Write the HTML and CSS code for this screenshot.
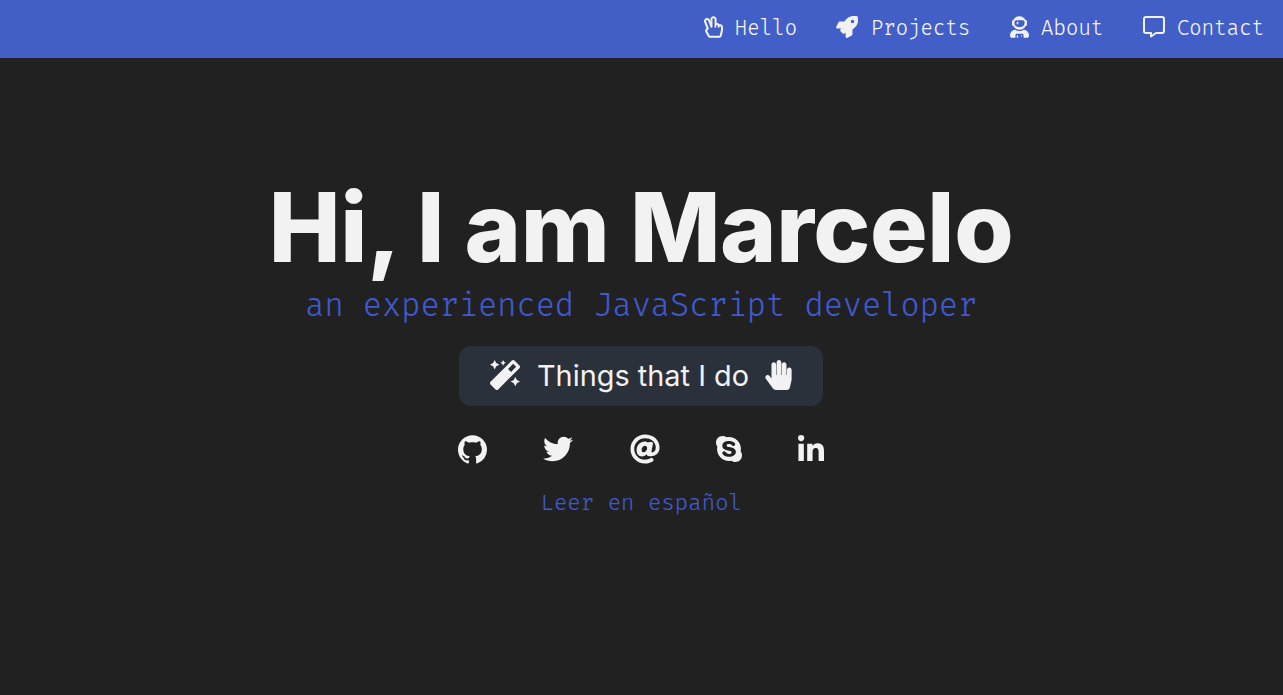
FILE: index.html
```html
<!DOCTYPE html>
<html lang="en">
<head>
<meta charset="utf-8">
<title>Marcelo</title>
<link rel="stylesheet" href="styles.css">
</head>
<body>
<nav class="nav">
  <a class="nav-link"><svg class="nav-icon peace" viewBox="0 0 448 512"><path fill="currentColor" d="M362.146 191.976c-13.710-21.649-38.761-34.016-65.006-30.341V74c0-40.804-32.811-74-73.141-74-40.330 0-73.140 33.196-73.140 74L160 168l-18.679-78.850C126.578 50.843 83.850 32.110 46.209 47.208 8.735 62.238-9.571 104.963 5.008 142.850l55.757 144.927c-30.557 24.956-43.994 57.809-24.733 92.218l54.853 97.999C102.625 498.970 124.730 512 148.575 512h205.702c30.744 0 57.558-21.440 64.555-51.797l27.427-118.999a67.801 67.801 0 0 0 1.729-15.203L448 256c0-44.956-43.263-77.343-85.854-64.024zM399.987 326c0 1.488-.169 2.977-.502 4.423l-27.427 119.001c-1.978 8.582-9.290 14.576-17.782 14.576H148.575c-6.486 0-12.542-3.621-15.805-9.449l-54.854-98c-4.557-8.141-2.619-18.668 4.508-24.488l26.647-21.764a16 16 0 0 0 4.812-18.139l-64.090-166.549C37.226 92.956 84.370 74.837 96.510 106.389l59.784 155.357A16 16 0 0 0 171.227 272h11.632c8.837 0 16-7.163 16-16V74c0-34.375 50.281-34.430 50.281 0v182c0 8.837 7.163 16 16 16h6.856c8.837 0 16-7.163 16-16v-28c0-25.122 36.567-25.159 36.567 0v28c0 8.837 7.163 16 16 16h6.856c8.837 0 16-7.163 16-16 0-25.120 36.567-25.160 36.567 0v70z"/></svg><span>Hello</span></a>
  <a class="nav-link"><svg class="nav-icon" viewBox="0 0 512 512"><path fill="currentColor" d="M505.120 19.094c-1.190-5.532-6.659-11-12.207-12.188C460.716 0 435.507 0 410.407 0 307.175 0 245.270 55.203 199.052 128H94.838c-16.348.016-35.557 11.875-42.887 26.484L2.516 253.297A28.400 28.400 0 0 0 0 264a24.009 24.009 0 0 0 24.006 24h103.810l-22.474 22.469c-11.365 11.360-12.996 32.258 0 45.250l50.904 50.906c11.156 11.188 32.156 13.156 45.277 0l22.475-22.469V488a24.009 24.009 0 0 0 24.006 24 28.560 28.560 0 0 0 10.707-2.516l98.728-49.390c14.629-7.297 26.508-26.500 26.508-42.860V312.797c72.598-46.313 128.035-108.406 128.035-211.094.093-25.203.093-50.406-6.862-82.610zM384.040 168A40 40 0 1 1 424.050 128 40.023 40.023 0 0 1 384.040 168z"/></svg><span>Projects</span></a>
  <a class="nav-link"><svg class="nav-icon astronaut" viewBox="0 0 448 512"><path fill="currentColor" d="M64 224h13.500c24.700 56.500 80.900 96 146.500 96s121.800-39.500 146.500-96H384c8.800 0 16-7.200 16-16v-96c0-8.800-7.200-16-16-16h-13.500C345.800 39.500 289.600 0 224 0S102.200 39.500 77.500 96H64c-8.800 0-16 7.200-16 16v96c0 8.800 7.200 16 16 16zm40-88c0-22.100 21.500-40 48-40h144c26.500 0 48 17.900 48 40v24c0 53-43 96-96 96h-48c-53 0-96-43-96-96v-24zm72 72l12-36 36-12-36-12-12-36-12 36-36 12 36 12 12 36zm151.600 113.400C297.700 340.700 262.200 352 224 352s-73.700-11.300-103.600-30.600C52.900 328.500 0 385 0 454.400v9.600c0 26.500 21.500 48 48 48h80v-64c0-17.700 14.300-32 32-32h128c17.700 0 32 14.300 32 32v64h80c26.500 0 48-21.500 48-48v-9.600c0-69.400-52.900-125.900-120.400-133zM272 448c-8.800 0-16 7.200-16 16s7.200 16 16 16 16-7.200 16-16-7.200-16-16-16zm-96 0c-8.800 0-16 7.200-16 16v48h32v-48c0-8.800-7.200-16-16-16z"/></svg><span>About</span></a>
  <a class="nav-link"><svg class="nav-icon" viewBox="0 0 22 22"><path fill="none" stroke="currentColor" stroke-width="2" stroke-linejoin="round" d="M3 1H19Q21 1 21 3V15Q21 17 19 17H13L8 20.500V17H3Q1 17 1 15V3Q1 1 3 1Z"/></svg><span>Contact</span></a>
</nav>
<main class="hero">
  <h1 class="title">Hi, I am Marcelo</h1>
  <p class="subtitle">an experienced JavaScript developer</p>
  <a class="button"><svg class="wand" viewBox="0 0 512 512"><path fill="currentColor" d="M224 96l16-32 32-16-32-16-16-32-16 32-32 16 32 16 16 32zM80 160l26.660-53.330L160 80l-53.340-26.670L80 0 53.340 53.330 0 80l53.340 26.670L80 160zm352 128l-26.660 53.330L352 368l53.340 26.670L432 448l26.660-53.330L512 368l-53.340-26.670L432 288zm70.620-193.770L417.770 9.380C411.530 3.120 403.340 0 395.150 0c-8.190 0-16.380 3.120-22.630 9.380L9.380 372.520c-12.500 12.500-12.500 32.760 0 45.250l84.850 84.850c6.250 6.250 14.440 9.370 22.620 9.370 8.190 0 16.380-3.120 22.630-9.370l363.140-363.150c12.500-12.480 12.500-32.750 0-45.240zM359.450 203.460l-50.910-50.910 86.600-86.600 50.910 50.910-86.600 86.600z"/></svg><span>Things that I do</span><svg class="hand" viewBox="0 0 448 512"><path fill="currentColor" d="M408.781 128.007C386.356 127.578 368 146.360 368 168.790V256h-8V79.790c0-22.430-18.356-41.212-40.781-40.783C297.488 39.423 280 57.169 280 79v177h-8V40.790C272 18.360 253.644-.422 231.219.007 209.488.423 192 18.169 192 40v216h-8V80.790c0-22.430-18.356-41.212-40.781-40.783C121.488 40.423 104 58.169 104 80v235.992l-31.648-43.519c-12.993-17.866-38.009-21.817-55.877-8.823-17.865 12.994-21.815 38.010-8.822 55.877l125.601 172.705A48 48 0 0 0 172.073 512h197.590c22.274 0 41.622-15.324 46.724-37.006l26.508-112.660a192.011 192.011 0 0 0 5.104-43.975V168c.001-21.831-17.487-39.577-39.218-39.993z"/></svg></a>
  <div class="social">
    <svg class="github" viewBox="0 0 16 15.700"><path fill="currentColor" d="M8 0C3.580 0 0 3.580 0 8c0 3.540 2.290 6.530 5.470 7.590.4.070.55-.17.55-.38 0-.19-.01-.82-.01-1.490-2.010.37-2.530-.49-2.690-.94-.09-.23-.48-.94-.82-1.130-.28-.15-.68-.52-.01-.53.63-.01 1.080.58 1.230.82.72 1.210 1.870.87 2.330.66.07-.52.28-.87.51-1.070-1.780-.2-3.640-.89-3.640-3.950 0-.87.31-1.590.82-2.150-.08-.2-.36-1.020.08-2.120 0 0 .67-.21 2.200.82.64-.18 1.320-.27 2-.27s1.360.09 2 .27c1.530-1.040 2.200-.82 2.200-.82.44 1.100.16 1.920.08 2.120.51.56.82 1.270.82 2.150 0 3.070-1.870 3.750-3.650 3.950.29.25.54.73.54 1.480 0 1.070-.01 1.930-.01 2.200 0 .21.15.46.55.38A8.010 8.010 0 0 0 16 8c0-4.420-3.580-8-8-8z"/></svg>
    <svg class="twitter" viewBox="0 0 512 512"><path fill="currentColor" d="M459.370 151.716c.325 4.548.325 9.097.325 13.645 0 138.720-105.583 298.558-298.558 298.558-59.452 0-114.680-17.219-161.137-47.106 8.447.974 16.568 1.299 25.340 1.299 49.055 0 94.213-16.568 130.274-44.832-46.132-.975-84.792-31.188-98.112-72.772 6.498.974 12.995 1.624 19.818 1.624 9.421 0 18.843-1.300 27.614-3.573-48.081-9.747-84.143-51.980-84.143-102.985v-1.299c13.969 7.797 30.214 12.670 47.431 13.319-28.264-18.843-46.781-51.005-46.781-87.391 0-19.492 5.197-37.360 14.294-52.954 51.655 63.675 129.300 105.258 216.365 109.807-1.624-7.797-2.599-15.918-2.599-24.040 0-57.828 46.782-104.934 104.934-104.934 30.213 0 57.502 12.670 76.670 33.137 23.715-4.548 46.456-13.320 66.599-25.340-7.798 24.366-24.366 44.833-46.132 57.827 21.117-2.273 41.584-8.122 60.426-16.243-14.292 20.791-32.161 39.308-52.628 54.253z"/></svg>
    <svg class="at" viewBox="0 0 512 512"><path fill="currentColor" d="M256 8C118.941 8 8 118.919 8 256c0 137.059 110.919 248 248 248 48.154 0 95.342-14.140 135.408-40.223 12.005-7.815 14.625-24.288 5.552-35.372l-10.177-12.433c-7.671-9.371-21.179-11.667-31.373-5.129C325.920 429.757 291.314 440 256 440c-101.458 0-184-82.542-184-184S154.542 72 256 72c100.139 0 184 57.619 184 160 0 38.786-21.093 79.742-58.170 83.693-17.349-.454-16.910-12.857-13.476-30.024l23.433-121.110C394.653 149.750 383.308 136 368.225 136h-44.981a13.518 13.518 0 0 0-13.432 11.993l-.010.092c-14.697-17.901-40.448-21.775-59.971-21.775-74.580 0-137.831 62.234-137.831 151.460 0 65.303 36.785 105.870 96 105.870 26.984 0 57.369-15.637 74.991-38.333 9.522 34.104 40.613 34.104 70.710 34.104C462.609 379.410 504 307.798 504 232 504 95.653 394.023 8 256 8zm-21.680 304.430c-22.249 0-36.070-15.623-36.070-40.771 0-44.993 30.779-72.729 58.630-72.729 22.292 0 35.601 15.241 35.601 40.770 0 45.061-33.875 72.730-58.161 72.730z"/></svg>
    <svg class="skype" viewBox="0 0 448 512"><path fill="currentColor" d="M424.700 299.800c2.900-14 4.700-28.900 4.700-43.800 0-113.500-91.900-205.300-205.300-205.300-14.900 0-29.700 1.700-43.800 4.700C161.300 40.700 137.700 32 112 32 50.200 32 0 82.200 0 144c0 25.700 8.700 49.300 23.300 68.200-2.900 14-4.700 28.900-4.700 43.800 0 113.500 91.900 205.300 205.300 205.300 14.900 0 29.700-1.700 43.800-4.700 19 14.600 42.600 23.300 68.200 23.300 61.800 0 112-50.200 112-112 .1-25.600-8.600-49.200-23.200-68.100zm-194.600 91.500c-65.600 0-120.500-29.200-120.500-65 0-16 9-30.600 29.500-30.600 31.200 0 34.100 44.900 88.100 44.900 25.700 0 42.300-11.400 42.300-26.300 0-18.700-16-21.600-42-28-62.500-15.400-117.800-22-117.800-87.200 0-59.200 58.600-81.100 109.100-81.100 55.100 0 110.800 21.900 110.800 55.400 0 16.900-11.400 31.800-30.300 31.800-28.300 0-29.200-33.500-75-33.500-25.700 0-42 7-42 22.500 0 19.800 20.800 21.800 69.100 33 41.400 9.300 90.700 26.800 90.700 77.600 0 59.100-57.100 86.500-112 86.500z"/></svg>
    <svg class="linkedin" viewBox="0 0 448 448"><path fill="currentColor" d="M100.280 448H7.400V148.900h92.880zM53.790 108.100C24.090 108.100 0 83.500 0 53.800a53.790 53.790 0 0 1 107.580 0c0 29.700-24.100 54.300-53.790 54.300zM447.900 448h-92.680V302.400c0-34.700-.7-79.200-48.290-79.200-48.290 0-55.690 37.700-55.690 76.700V448h-92.780V148.900h89.080v40.800h1.300c12.400-23.500 42.690-48.300 87.880-48.300 94 0 111.280 61.900 111.280 142.300V448z"/></svg>
  </div>
  <a class="language">Leer en español</a>
</main>
</body>
</html>
```
FILE: styles.css
```css
* { box-sizing: border-box; }
body {
  margin: 0;
  min-height: 100vh;
  background: #212121;
  color: #f2f2f2;
  font-family: Inter, sans-serif;
}
svg { display: block; flex: none; }
.nav {
  display: flex;
  justify-content: flex-end;
  align-items: center;
  gap: 39.500px;
  height: 58px;
  padding: 0 19px 4px 0;
  background: #425fc8;
  font: 300 20.8px/30px "Fira Code", "Fira Mono", "Liberation Mono", monospace;
  letter-spacing: -0.0154em;
}
.nav-link { display: flex; align-items: center; gap: 12px; }
.nav-link span { padding-top: 4px; margin-bottom: 0; line-height: 26px; }
.nav-icon { width: 22px; height: 22px; }
.peace, .astronaut { width: 19px; }
.hero {
  display: flex;
  flex-direction: column;
  align-items: center;
  padding: 121px 1px 0 0;
}
.title {
  margin: 0;
  font-size: 96px;
  line-height: 96px;
  font-weight: 800;
  letter-spacing: -0.4px;
  white-space: nowrap;
}
.subtitle {
  margin: 7px 0 0;
  color: #4059d0;
  font: 300 32px/48px "Fira Code", "Fira Mono", "Liberation Mono", monospace;
  letter-spacing: -0.0154em;
}
.button {
  display: flex;
  align-items: center;
  justify-content: center;
  width: 364px;
  height: 60px;
  margin-top: 16px;
  padding-bottom: 2px;
  border-radius: 12px;
  background: #2b313b;
  font-size: 28.8px;
  letter-spacing: 0.04px;
}
.wand { width: 30px; height: 30px; margin-right: 17px; }
.hand { width: 27px; height: 30px; margin-left: 16px; }
.social {
  display: flex;
  justify-content: space-between;
  align-items: center;
  width: 366px;
  height: 30px;
  margin-top: 28px;
}
.github { width: 29px; height: 29px; }
.twitter, .at { width: 30px; height: 30px; }
.skype { width: 26px; height: 30px; }
.linkedin { width: 26px; height: 26px; margin-bottom: 2px; }
.language {
  margin-top: 24px;
  color: #4059d0;
  font: 300 22.4px/30px "Fira Code", "Fira Mono", "Liberation Mono", monospace;
  letter-spacing: -0.0154em;
}
```
